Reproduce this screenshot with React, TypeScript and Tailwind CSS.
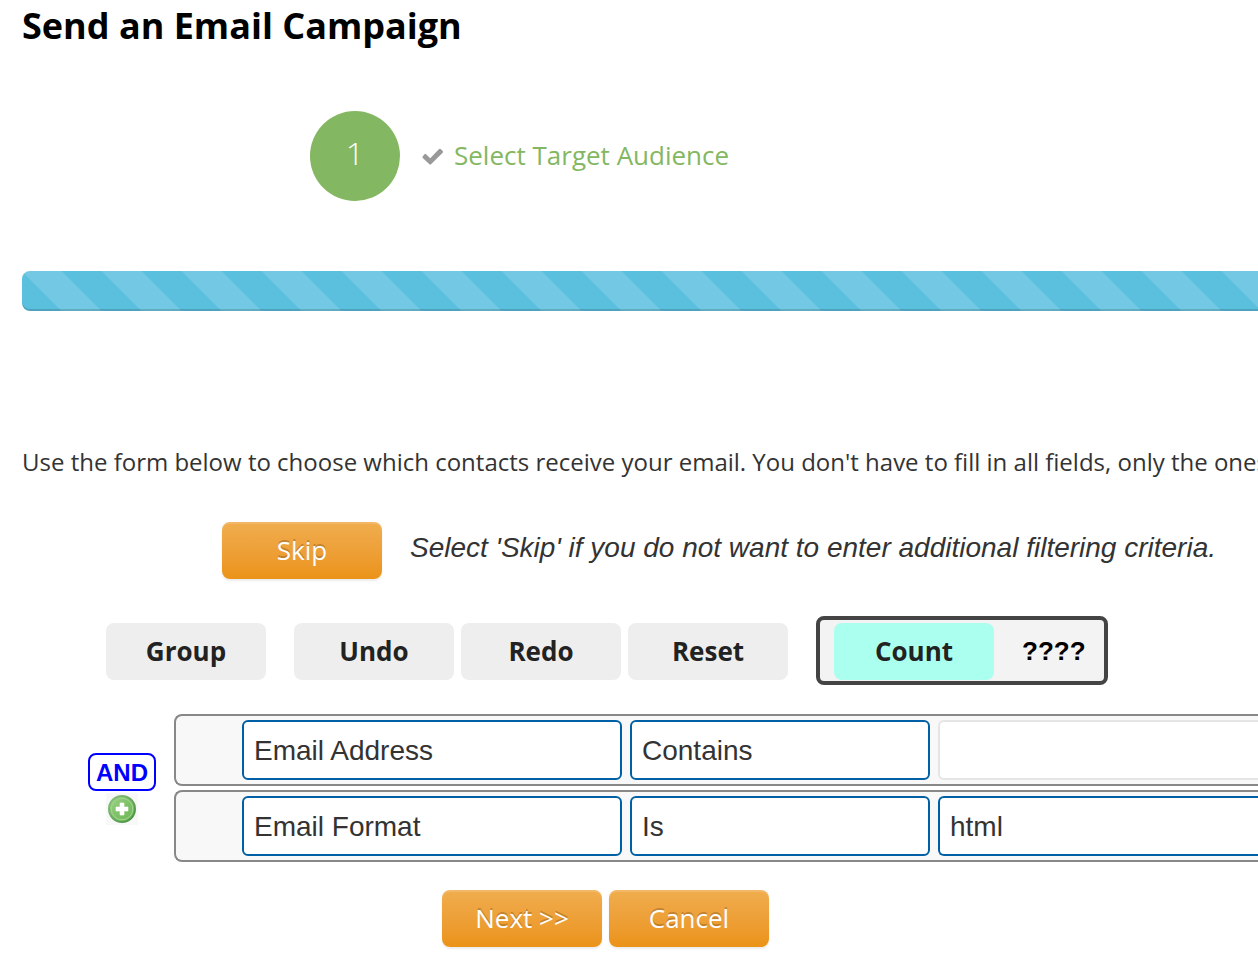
import type { ReactNode } from "react";

function PrimaryButton({ children }: { children: ReactNode }) {
  return (
    <button
      type="button"
      className="h-[57px] w-40 shrink-0 rounded-lg bg-linear-to-b from-[#f0ad4e] to-[#eb9316] pb-0.5 text-[26px] leading-9 text-white shadow-[inset_0_2px_0_rgba(255,255,255,0.15),0_2px_2px_rgba(0,0,0,0.075)] [text-shadow:0_-2px_0_rgba(0,0,0,0.2)]"
    >
      {children}
    </button>
  );
}

function ToolButton({ children }: { children: ReactNode }) {
  return (
    <button
      type="button"
      className="h-[57px] w-40 shrink-0 rounded-lg bg-[#eeeeee] pb-0.5 text-[26px] leading-9 font-bold text-[#222222]"
    >
      {children}
    </button>
  );
}

const fieldClass =
  "h-[60px] appearance-none rounded-md border-2 bg-white px-2.5 pt-0.5 font-['Liberation_Sans',sans-serif] text-[28px] leading-10 text-[#333333] outline-none";

type Criterion = { id: string; field: string; operator: string; value: string };

const criteria: Criterion[] = [
  { id: "address", field: "Email Address", operator: "Contains", value: "" },
  { id: "format", field: "Email Format", operator: "Is", value: "html" },
];

function CriterionRow({ id, field, operator, value }: Criterion) {
  return (
    <div className="flex gap-2 rounded-lg rounded-r-none border-2 border-r-0 border-[#888888] bg-[#f8f8f8] py-1 pl-[66px]">
      <select aria-label="Field" name={`${id}-field`} defaultValue={field} className={`${fieldClass} w-[380px] shrink-0 border-[#0060a5]`}>
        <option>Email Address</option>
        <option>Email Format</option>
      </select>
      <select aria-label="Operator" name={`${id}-operator`} defaultValue={operator} className={`${fieldClass} w-[300px] shrink-0 border-[#0060a5]`}>
        <option>Contains</option>
        <option>Is</option>
      </select>
      <input
        aria-label="Value"
        name={`${id}-value`}
        type="text"
        defaultValue={value}
        className={`${fieldClass} min-w-0 flex-1 rounded-r-none border-r-0 ${value ? "border-[#0060a5]" : "border-[#e5e5e5]"}`}
      />
    </div>
  );
}

function AddIcon() {
  return (
    <svg viewBox="0 0 32 32" className="size-8" aria-hidden="true">
      <defs>
        <linearGradient id="disc" x1="0" y1="0" x2="1" y2="1">
          <stop offset="0" stopColor="#a0d28b" />
          <stop offset="0.5" stopColor="#7fc268" />
          <stop offset="1" stopColor="#6cb856" />
        </linearGradient>
        <linearGradient id="rim" x1="0" y1="0" x2="1" y2="1">
          <stop offset="0" stopColor="#8cc37f" />
          <stop offset="1" stopColor="#478f40" />
        </linearGradient>
      </defs>
      <circle cx="16" cy="16" r="13" fill="url(#disc)" stroke="url(#rim)" strokeWidth="2" />
      <circle cx="16" cy="16" r="10.8" fill="none" stroke="#a3d492" strokeWidth="1" />
      <path d="M14 10h4v4h4v4h-4v4h-4v-4h-4v-4h4z" fill="#fff" stroke="#fff" strokeWidth="0.6" />
    </svg>
  );
}

export default function App() {
  return (
    <main className="overflow-hidden bg-white pb-6 pl-[22px] font-['Open_Sans',sans-serif] text-[#333333]">
      <h1 className="text-[36px] leading-[52px] font-bold text-black">Send an Email Campaign</h1>

      <div className="mt-[59px] ml-72 flex items-center">
        <div className="flex size-[90px] items-center justify-center rounded-full bg-[#84b761] pb-1.5 text-[32px] font-light text-white">
          1
        </div>
        <svg viewBox="0 0 22 18" className="mt-0.5 ml-[22px] h-[18px] w-[22px]" aria-hidden="true">
          <path
            d="M3.8 6.1 8.2 10.2 17.1 1.1Q17.9 .3 18.7 1.1L20.7 3.1Q21.5 3.9 20.7 4.7L9 16.2Q8.2 17 7.4 16.2L.8 9.9Q0 9.1.8 8.3L2.5 6.2Q3.1 5.5 3.8 6.1Z"
            fill="#999999"
          />
        </svg>
        <span className="ml-2.5 pb-0.5 text-[26px] leading-9 text-[#84b761]">Select Target Audience</span>
      </div>

      <div
        role="progressbar"
        aria-label="Campaign progress"
        className="mt-[70px] h-10 rounded-l-lg bg-[#5bc0de] bg-[linear-gradient(45deg,rgba(255,255,255,0.15)_25%,transparent_25%,transparent_50%,rgba(255,255,255,0.15)_50%,rgba(255,255,255,0.15)_75%,transparent_75%,transparent)] bg-size-[80px_80px] shadow-[inset_0_-2px_0_rgba(0,0,0,0.15)]"
      />

      <p className="mt-[133px] text-[24px] leading-9 whitespace-nowrap">
        Use the form below to choose which contacts receive your email. You don't have to fill in all fields, only the ones
      </p>

      <div className="mt-[42px] ml-[200px] flex items-center gap-7">
        <PrimaryButton>Skip</PrimaryButton>
        <em className="pb-1.5 font-['Liberation_Sans',sans-serif] text-[28px] leading-9 whitespace-nowrap">
          Select 'Skip' if you do not want to enter additional filtering criteria.
        </em>
      </div>

      <div className="mt-[37px] ml-[84px] flex gap-7">
        <div className="flex gap-7 pt-[7px]">
          <ToolButton>Group</ToolButton>
          <div className="flex gap-[7px]">
            <ToolButton>Undo</ToolButton>
            <ToolButton>Redo</ToolButton>
            <ToolButton>Reset</ToolButton>
          </div>
        </div>
        <div className="flex h-[69px] w-[292px] shrink-0 items-start rounded-lg border-4 border-[#444444] bg-[#f3f3f3] pt-[3px] pl-3.5">
          <button type="button" className="h-[57px] w-40 rounded-lg bg-[#aaffee] pb-0.5 text-[26px] leading-9 font-bold text-[#222222]">
            Count
          </button>
          <output className="ml-7 font-['Liberation_Sans',sans-serif] text-[26px] leading-[57px] font-bold text-black">????</output>
        </div>
      </div>

      <div className="mt-[29px] ml-[66px] flex gap-[18px]">
        <div className="flex w-[68px] shrink-0 flex-col items-center gap-0.5 pt-[39px]">
          <button
            type="button"
            className="h-[38px] w-full rounded-lg border-2 border-[#0000ff] pt-0.5 font-['Liberation_Sans',sans-serif] text-[24px] leading-8 font-bold text-[#0000ff]"
          >
            AND
          </button>
          <button type="button" aria-label="Add condition" className="size-8 bg-[#f8f8f8]">
            <AddIcon />
          </button>
        </div>
        <div className="flex min-w-0 flex-1 flex-col gap-1">
          {criteria.map((criterion) => (
            <CriterionRow key={criterion.id} {...criterion} />
          ))}
        </div>
      </div>

      <div className="mt-7 ml-[420px] flex gap-[7px]">
        <PrimaryButton>Next &gt;&gt;</PrimaryButton>
        <PrimaryButton>Cancel</PrimaryButton>
      </div>
    </main>
  );
}
